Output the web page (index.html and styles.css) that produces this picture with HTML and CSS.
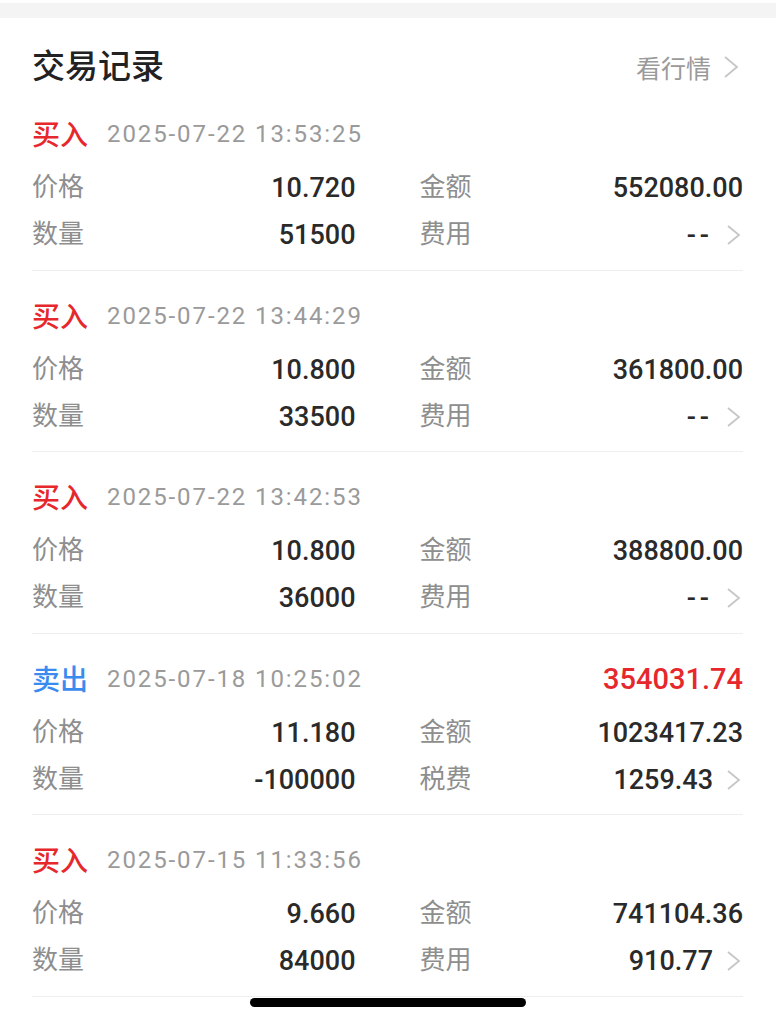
FILE: index.html
```html
<!DOCTYPE html>
<html lang="zh-CN">
<head>
    <meta charset="UTF-8">
    <meta name="viewport" content="width=device-width, initial-scale=1.0">
    <title>交易记录</title>
    <link rel="stylesheet" href="styles.css">
</head>
<body>
    <div class="top-band"></div>

    <section class="card">
        <div class="card-head">
            <h1 class="card-title">交易记录</h1>
            <a class="more">看行情
                <svg class="chev chev-lg" viewBox="0 0 19 24"><path d="M3 2 L15 12 L3 22"/></svg>
            </a>
        </div>

        <ul class="trade-list">
            <li class="trade">
                <div class="trade-head">
                    <span class="side buy">买入</span>
                    <span class="time">2025-07-22 13:53:25</span>
                </div>
                <div class="trade-grid">
                    <div class="cell"><span class="label">价格</span><span class="value">10.720</span></div>
                    <div class="cell"><span class="label">金额</span><span class="value">552080.00</span></div>
                    <div class="cell"><span class="label">数量</span><span class="value">51500</span></div>
                    <div class="cell"><span class="label">费用</span><span class="value"><span class="dash">--</span><svg class="chev" viewBox="0 0 18 22"><path d="M3 2 L14 11 L3 20"/></svg></span></div>
                </div>
            </li>

            <li class="trade">
                <div class="trade-head">
                    <span class="side buy">买入</span>
                    <span class="time">2025-07-22 13:44:29</span>
                </div>
                <div class="trade-grid">
                    <div class="cell"><span class="label">价格</span><span class="value">10.800</span></div>
                    <div class="cell"><span class="label">金额</span><span class="value">361800.00</span></div>
                    <div class="cell"><span class="label">数量</span><span class="value">33500</span></div>
                    <div class="cell"><span class="label">费用</span><span class="value"><span class="dash">--</span><svg class="chev" viewBox="0 0 18 22"><path d="M3 2 L14 11 L3 20"/></svg></span></div>
                </div>
            </li>

            <li class="trade">
                <div class="trade-head">
                    <span class="side buy">买入</span>
                    <span class="time">2025-07-22 13:42:53</span>
                </div>
                <div class="trade-grid">
                    <div class="cell"><span class="label">价格</span><span class="value">10.800</span></div>
                    <div class="cell"><span class="label">金额</span><span class="value">388800.00</span></div>
                    <div class="cell"><span class="label">数量</span><span class="value">36000</span></div>
                    <div class="cell"><span class="label">费用</span><span class="value"><span class="dash">--</span><svg class="chev" viewBox="0 0 18 22"><path d="M3 2 L14 11 L3 20"/></svg></span></div>
                </div>
            </li>

            <li class="trade">
                <div class="trade-head">
                    <span class="side sell">卖出</span>
                    <span class="time">2025-07-18 10:25:02</span>
                    <span class="profit">354031.74</span>
                </div>
                <div class="trade-grid">
                    <div class="cell"><span class="label">价格</span><span class="value">11.180</span></div>
                    <div class="cell"><span class="label">金额</span><span class="value">1023417.23</span></div>
                    <div class="cell"><span class="label">数量</span><span class="value">-100000</span></div>
                    <div class="cell"><span class="label">税费</span><span class="value">1259.43<svg class="chev" viewBox="0 0 18 22"><path d="M3 2 L14 11 L3 20"/></svg></span></div>
                </div>
            </li>

            <li class="trade">
                <div class="trade-head">
                    <span class="side buy">买入</span>
                    <span class="time">2025-07-15 11:33:56</span>
                </div>
                <div class="trade-grid">
                    <div class="cell"><span class="label">价格</span><span class="value">9.660</span></div>
                    <div class="cell"><span class="label">金额</span><span class="value">741104.36</span></div>
                    <div class="cell"><span class="label">数量</span><span class="value">84000</span></div>
                    <div class="cell"><span class="label">费用</span><span class="value">910.77<svg class="chev" viewBox="0 0 18 22"><path d="M3 2 L14 11 L3 20"/></svg></span></div>
                </div>
            </li>
        </ul>
    </section>

    <div class="home-bar"></div>
</body>
</html>
```

FILE: styles.css
```css
:root {
    --red: #e6282d;
    --blue: #3a8bef;
    --text: #2a2a2a;
    --muted: #8e8e8e;
    --line: #eeeeee;
}

* {
    margin: 0;
    padding: 0;
    box-sizing: border-box;
}

body {
    background: #ffffff;
    color: var(--text);
    font-family: Roboto, "Noto Sans CJK SC", sans-serif;
}

.top-band {
    height: 15px;
    margin-top: 3px;
    background: #f4f4f4;
}

.card {
    padding: 0 33px 0 32px;
}

.card-head {
    display: flex;
    justify-content: space-between;
    align-items: center;
    height: 71px;
    padding-top: 27px;
}

.card-title {
    font-size: 33px;
    font-weight: 500;
    line-height: 44px;
    color: #222222;
}

.more {
    display: flex;
    align-items: center;
    font-size: 25px;
    color: #9a9a9a;
    margin-right: 2px;
}

.chev {
    width: 18px;
    height: 22px;
    margin-left: 12px;
    fill: none;
    stroke: #c6c6c6;
    stroke-width: 1.8;
}

.chev-lg {
    width: 19px;
    height: 24px;
    margin-left: 11px;
}

.trade-list {
    list-style: none;
}

.trade {
    padding: 26px 0 15.5px;
    border-bottom: 1px solid var(--line);
}

.trade-head {
    display: flex;
    align-items: center;
    height: 38px;
}

.side {
    font-size: 28px;
    font-weight: 500;
    margin-right: 19px;
    padding-bottom: 2px;
}

.buy {
    color: var(--red);
}

.sell {
    color: var(--blue);
}

.time {
    font-size: 24px;
    color: #9a9a9a;
    letter-spacing: 1.9px;
}

.profit {
    margin-left: auto;
    font-size: 29px;
    font-weight: 500;
    color: var(--red);
}

.trade-grid {
    display: grid;
    grid-template-columns: 1fr 1fr;
    column-gap: 64px;
    row-gap: 7px;
    margin-top: 14px;
}

.cell {
    display: flex;
    justify-content: space-between;
    align-items: center;
    height: 40px;
}

.label {
    font-size: 26px;
    color: var(--muted);
    padding-bottom: 5px;
}

.value {
    display: flex;
    align-items: center;
    font-size: 27px;
    font-weight: 500;
    color: var(--text);
    padding-top: 2px;
}

.dash {
    letter-spacing: 4px;
}

.home-bar {
    position: fixed;
    left: 50%;
    bottom: 17px;
    width: 276px;
    height: 9px;
    border-radius: 5px;
    background: #000000;
    transform: translateX(-50%);
}
```
